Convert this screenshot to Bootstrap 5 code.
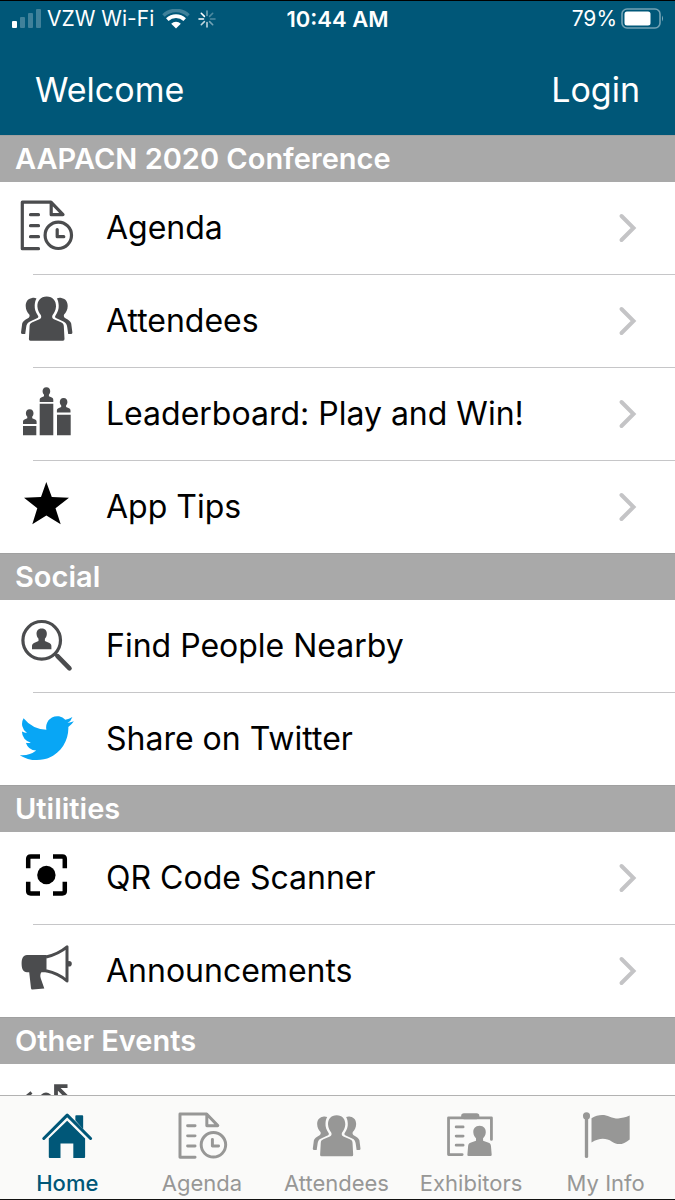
<!DOCTYPE html>
<html lang="en">
<head>
<meta charset="utf-8">
<meta name="viewport" content="width=device-width, initial-scale=1">
<title>AAPACN 2020 Conference</title>
<link href="https://cdn.jsdelivr.net/npm/bootstrap@5.3.0/dist/css/bootstrap.min.css" rel="stylesheet">
<style>
  body { font-family: Inter, "Liberation Sans", sans-serif; color: #000; background: #fff; }
  a { color: inherit; text-decoration: none; }
  .top-area { background: #005778; border-top: 1px solid #000; color: #fff; }
  .status { font-size: 21px; line-height: 28px; padding: 4px 11px 12px; }
  .status > * { flex: 1 1 0; }
  .clock { font-size: 22px; }
  .title-bar { font-size: 34px; line-height: 40px; padding: 25px 35px; }
  .section-title { background: #a9a9a9; color: #fff; font-size: 29px; font-weight: 600; line-height: 46px; padding: 0 15px; border-top: 1px solid #a0a0a0; }
  .menu-row { height: 92px; padding: 0 37px 0 18px; font-size: 32px; gap: 32px; }
  li:not(:last-child) > .menu-row { height: 93px; padding-bottom: 1px; background: linear-gradient(#c6c6c8, #c6c6c8) 33px 100% / 100% 1px no-repeat; }
  .ico { width: 56px; height: 56px; color: #4b4c4e; flex: none; }
  .ico.solid { color: #000; }
  .ico.bird { color: #08a6f5; }
  .chev { width: 20px; height: 32px; color: #c4c4c6; flex: none; }
  .tabs { background: #fafaf9; border-top: 1px solid #b2b2b2; border-bottom: 1px solid #111; padding: 16px 2px 5px 0; }
  .tabs a { color: #979796; font-size: 22px; line-height: 22px; gap: 8px; flex: 1 1 0; }
  .tabs a.active { color: #005778; font-weight: 500; }
  .tabs svg { width: 52px; height: 52px; }
</style>
</head>
<body>
<svg class="d-none" aria-hidden="true">
  <symbol id="i-agenda" viewBox="0 0 56 56">
    <g fill="none" stroke="currentColor" stroke-width="3.2" stroke-linecap="round" stroke-linejoin="round">
      <path d="M20.5 48.7H4.3V2.2H33L45 14.7H33.2V2.5M12.5 14.7H20.5M12.5 25.7H20.5M12.5 36.7H20.5M39.2 29.5V36.7H45.8"/>
      <circle cx="40.3" cy="35.3" r="13.2"/>
    </g>
  </symbol>
  <symbol id="i-people" viewBox="0 0 56 56">
    <g fill="currentColor">
      <path d="M28.7 3.5C35 3.5 38.2 8 38 13.5C37.8 17.5 36 20 34.6 22C33.8 23.5 34 25.5 36 26.3L43 29.3C45 30.2 45.6 31 45.8 33L46.5 46Q46.5 47.7 45 47.7H12.4Q10.8 47.7 10.9 46L11.6 33C11.8 31 12.4 30.2 14.4 29.3L21.4 26.3C23.4 25.5 23.6 23.5 22.8 22C21.4 20 19.6 17.5 19.4 13.5C19.2 8 22.4 3.5 28.7 3.5Z"/>
      <path id="side" d="M18.5 5.5C17 4.7 15.5 4.7 14 5C9.5 5.7 7.7 9 7.7 13C7.7 17 9.5 19.5 11.3 21.5C12 23 11.5 24.5 9.5 25.5C7 27 4.8 28 4.2 30.5L3 39.5Q3 41 4.5 41H7.2L8.2 34C8.5 31.5 9.5 29.5 12 28.5L19.5 25C20.5 24.3 20.5 23.5 20 22.7C17.5 19 16.5 16 16.7 12.5C16.8 10 17.3 7.5 18.5 5.5Z"/>
      <use href="#side" transform="translate(57.4 0) scale(-1 1)"/>
    </g>
  </symbol>
  <symbol id="i-leader" viewBox="0 0 56 56">
    <g fill="currentColor">
      <path d="M5 40H18.3V49.3H5ZM21.7 17.7H35.3V49.3H21.7ZM39 28.7H52.7V49.3H39Z"/>
      <path id="bust" d="M28.4 1.2C31 1.2 32.4 3.2 32.2 5.6C32.1 7.2 31.5 8 30.9 8.8V10.2L33.8 11.6C35 12.2 35.3 13 35.3 14V15.9H21.7V14C21.7 13 22 12.2 23.2 11.6L26 10.2V8.8C25.3 8 24.7 7.2 24.6 5.6C24.4 3.2 25.8 1.2 28.4 1.2Z"/>
      <use href="#bust" x="-16.7" y="22"/>
      <use href="#bust" x="17.2" y="10.7"/>
    </g>
  </symbol>
  <symbol id="i-star" viewBox="0 0 56 56">
    <path fill="currentColor" d="M28.3 3L33.8 17.9L51 18.7L37.5 29.2L42.7 45.3L28.4 36.4L14.3 45.3L19.3 29.2L6 18.7L23 17.9Z"/>
  </symbol>
  <symbol id="i-find" viewBox="0 0 56 56">
    <circle cx="23.7" cy="22.3" r="18.8" fill="none" stroke="currentColor" stroke-width="3.2"/>
    <path d="M37 35.8L39.5 38.2" stroke="currentColor" stroke-width="3"/>
    <path d="M39.5 38.2L51.5 50.4" stroke="currentColor" stroke-width="4.6" stroke-linecap="round"/>
    <path fill="currentColor" d="M23.7 10.5C27.5 10.5 29.2 13.2 28.8 16.4C28.6 18.6 27.5 19.8 26.9 20.8V23L31.4 25C33 25.8 33.4 26.8 33.4 28.4V31.2H14V28.4C14 26.8 14.4 25.8 16 25L20.5 23V20.8C19.9 19.8 18.8 18.6 18.6 16.4C18.2 13.2 19.9 10.5 23.7 10.5Z"/>
  </symbol>
  <symbol id="i-bird" viewBox="0 0 56 56">
    <path fill="currentColor" transform="translate(1.8 -1.6) scale(3.38)" d="M5.026 15c6.038 0 9.341-5.003 9.341-9.334q.002-.211-.006-.422A6.7 6.7 0 0 0 16 3.542a6.7 6.7 0 0 1-1.889.518 3.3 3.3 0 0 0 1.447-1.817 6.5 6.5 0 0 1-2.087.793A3.286 3.286 0 0 0 7.875 6.03 9.32 9.32 0 0 1 1.112 2.6 3.29 3.29 0 0 0 2.13 6.99 3.3 3.3 0 0 1 .64 6.575v.045a3.29 3.29 0 0 0 2.632 3.218 3.2 3.2 0 0 1-.865.115 3 3 0 0 1-.614-.057 3.28 3.28 0 0 0 3.067 2.277A6.6 6.6 0 0 1 .78 13.58a6 6 0 0 1-.78-.045A9.34 9.34 0 0 0 5.026 15"/>
  </symbol>
  <symbol id="i-scan" viewBox="0 0 56 56">
    <path fill="none" stroke="currentColor" stroke-width="4.5" d="M10.2 18.3V9Q10.2 6.5 12.7 6.5H22M35 6.5H44.3Q46.8 6.5 46.8 9V18.3M46.8 31.7V41Q46.8 43.4 44.3 43.4H35M22 43.4H12.7Q10.2 43.4 10.2 41V31.7"/>
    <circle cx="28.4" cy="25" r="9.2" fill="currentColor"/>
  </symbol>
  <symbol id="i-horn" viewBox="0 0 56 56">
    <path fill="currentColor" d="M9 12H28.5V29.3H23.4C22.2 31 22 33 22.8 35.5L26.3 45.5L14.5 46.6C13.6 46.6 13.2 46.2 13 45.3L11.2 29.3H9C5 29.3 3.6 25.5 3.6 20.6C3.6 15.5 5 12 9 12Z"/>
    <path fill="none" stroke="currentColor" stroke-width="3" stroke-linejoin="round" d="M28 14C36 12 43.5 8.5 49 3.8V38C43.5 33 36 29.5 28 27.8"/>
    <circle cx="51" cy="20.7" r="2.8" fill="currentColor"/>
  </symbol>
  <symbol id="i-event" viewBox="0 0 56 56">
    <path fill="none" stroke="currentColor" stroke-width="3.8" d="M38 18V4.2H49.5M38.5 4.7L52 18"/>
    <path fill="none" stroke="currentColor" stroke-width="3" d="M8.500 14.500L13.500 10.500"/>
    <circle cx="28" cy="16.5" r="6" fill="currentColor"/>
  </symbol>
  <symbol id="i-home" viewBox="0 0 56 56">
    <path fill="none" stroke="currentColor" stroke-width="3.3" stroke-linecap="round" stroke-linejoin="round" d="M3 28.5L28.2 3.4L53.4 28.5"/>
    <path fill="currentColor" d="M37 9V4.4Q37 3.4 38 3.4H44.4Q45.4 3.4 45.4 4.4V18.5ZM28.2 9.3L47.5 28.5V48.5Q47.5 49.5 46.5 49.5H34.8V34H21V49.5H9.4Q8.4 49.5 8.4 48.5V28.5Z"/>
  </symbol>
  <symbol id="i-board" viewBox="0 0 56 56">
    <path fill="none" stroke="currentColor" stroke-width="3" stroke-linecap="round" stroke-linejoin="round" d="M18.5 45.9H3.8V6.3H50V29.5M12 16.1H19.5M12 25.9H19.5M12 35.7H19.5"/>
    <rect x="17.4" y="1.4" width="19.6" height="6.3" rx="3" fill="currentColor"/>
    <path fill="currentColor" d="M37.2 14.8C41.8 14.8 44.2 18 43.9 22C43.7 25 42.2 26.8 41 28.3V31L47 33.2C48.8 34 49.3 35 49.5 36.6L50.3 46Q50.3 47.4 49 47.4H25.4Q24 47.4 24.1 46L24.9 36.6C25.1 35 25.6 34 27.4 33.2L33.4 31V28.3C32.2 26.8 30.7 25 30.5 22C30.2 18 32.6 14.8 37.2 14.8Z"/>
  </symbol>
  <symbol id="i-flag" viewBox="0 0 56 56">
    <path stroke="currentColor" stroke-width="3.6" stroke-linecap="round" d="M7 5V47.8"/>
    <circle cx="7" cy="4.2" r="3.8" fill="currentColor"/>
    <path fill="currentColor" d="M12.4 6.8C19 2.5 26 2.4 32 5C39 8 46 7.2 53.5 3.9V29.5C46.5 35.5 40.5 36 34.5 32C27.5 27.5 20.5 28 12.4 32.8Z"/>
  </symbol>
  <symbol id="i-chev" viewBox="0 0 20 32">
    <path fill="none" stroke="currentColor" stroke-width="4" stroke-linecap="round" stroke-linejoin="miter" d="M3.500 4L15.500 16L3.500 28"/>
  </symbol>
</svg>

<div class="d-flex flex-column vh-100 overflow-hidden">
  <header class="top-area flex-shrink-0">
    <div class="status d-flex align-items-center">
      <div class="d-flex align-items-center text-nowrap">
        <svg width="32" height="20" viewBox="0 0 32 20" fill="#fff" aria-hidden="true"><rect x="1" y="12" width="5" height="7" rx="1"/><g opacity=".25"><rect x="9" y="8" width="5" height="11" rx="1"/><rect x="17" y="4" width="5" height="15" rx="1"/><rect x="25" y="0" width="5" height="19" rx="1"/></g></svg>
        <span class="ms-1">VZW Wi-Fi</span>
        <svg class="ms-2" width="28" height="20" viewBox="0 0 28 20" fill="none" stroke="#fff" stroke-width="3.6" aria-hidden="true"><path opacity=".25" d="M1.5 6.5A18 18 0 0 1 26.5 6.5"/><path d="M5.3 10.6A12.5 12.5 0 0 1 22.7 10.6"/><path fill="#fff" stroke="none" d="M14 19.5L9.2 14.7A7 7 0 0 1 18.8 14.7Z"/></svg>
        <svg class="ms-2" width="18" height="18" viewBox="0 0 18 18" stroke="#fff" stroke-width="1.6" stroke-linecap="round" aria-hidden="true"><path d="M1 9H5.5M3.3 3.3L6.4 6.4"/><path opacity=".75" d="M3.3 14.7L6.4 11.6M9 17V12.5"/><path opacity=".45" d="M9 1V5.5M14.7 14.7L11.6 11.6"/><path opacity=".3" d="M14.7 3.3L11.6 6.4M17 9H12.5"/></svg>
      </div>
      <div class="clock text-center fw-semibold text-nowrap">10:44 AM</div>
      <div class="d-flex align-items-center justify-content-end text-nowrap">
        <span class="me-1">79%</span>
        <svg width="43" height="22" viewBox="0 0 43 22" aria-hidden="true"><rect x="1" y="1" width="38" height="19" rx="5" fill="none" stroke="#fff" stroke-opacity=".45" stroke-width="1.6"/><rect x="3.5" y="3.5" width="26" height="14" rx="2.5" fill="#fff"/><path d="M41 7.5Q43 10.5 41 13.5Z" fill="#fff" opacity=".5"/></svg>
      </div>
    </div>
    <div class="title-bar d-flex justify-content-between">
      <span>Welcome</span>
      <a href="#login">Login</a>
    </div>
  </header>

  <main class="flex-grow-1 overflow-hidden">
    <h2 class="section-title m-0">AAPACN 2020 Conference</h2>
    <ul class="list-unstyled m-0">
      <li><a href="#agenda" class="menu-row d-flex align-items-center"><svg class="ico" aria-hidden="true"><use href="#i-agenda"/></svg><span class="flex-grow-1">Agenda</span><svg class="chev" aria-hidden="true"><use href="#i-chev"/></svg></a></li>
      <li><a href="#attendees" class="menu-row d-flex align-items-center"><svg class="ico" aria-hidden="true"><use href="#i-people"/></svg><span class="flex-grow-1">Attendees</span><svg class="chev" aria-hidden="true"><use href="#i-chev"/></svg></a></li>
      <li><a href="#leaderboard" class="menu-row d-flex align-items-center"><svg class="ico" aria-hidden="true"><use href="#i-leader"/></svg><span class="flex-grow-1">Leaderboard: Play and Win!</span><svg class="chev" aria-hidden="true"><use href="#i-chev"/></svg></a></li>
      <li><a href="#tips" class="menu-row d-flex align-items-center"><svg class="ico solid" aria-hidden="true"><use href="#i-star"/></svg><span class="flex-grow-1">App Tips</span><svg class="chev" aria-hidden="true"><use href="#i-chev"/></svg></a></li>
    </ul>
    <h2 class="section-title m-0">Social</h2>
    <ul class="list-unstyled m-0">
      <li><a href="#nearby" class="menu-row d-flex align-items-center"><svg class="ico" aria-hidden="true"><use href="#i-find"/></svg><span class="flex-grow-1">Find People Nearby</span></a></li>
      <li><a href="#share" class="menu-row d-flex align-items-center"><svg class="ico bird" aria-hidden="true"><use href="#i-bird"/></svg><span class="flex-grow-1">Share on Twitter</span></a></li>
    </ul>
    <h2 class="section-title m-0">Utilities</h2>
    <ul class="list-unstyled m-0">
      <li><a href="#scanner" class="menu-row d-flex align-items-center"><svg class="ico solid" aria-hidden="true"><use href="#i-scan"/></svg><span class="flex-grow-1">QR Code Scanner</span><svg class="chev" aria-hidden="true"><use href="#i-chev"/></svg></a></li>
      <li><a href="#announcements" class="menu-row d-flex align-items-center"><svg class="ico" aria-hidden="true"><use href="#i-horn"/></svg><span class="flex-grow-1">Announcements</span><svg class="chev" aria-hidden="true"><use href="#i-chev"/></svg></a></li>
    </ul>
    <h2 class="section-title m-0">Other Events</h2>
    <ul class="list-unstyled m-0">
      <li><div class="menu-row d-flex align-items-center"><svg class="ico" aria-hidden="true"><use href="#i-event"/></svg></div></li>
    </ul>
  </main>

  <nav class="tabs d-flex flex-shrink-0" aria-label="Main">
    <a href="#home" class="active d-flex flex-column align-items-center" aria-current="page"><svg aria-hidden="true"><use href="#i-home"/></svg><span>Home</span></a>
    <a href="#agenda" class="d-flex flex-column align-items-center"><svg aria-hidden="true"><use href="#i-agenda"/></svg><span>Agenda</span></a>
    <a href="#attendees" class="d-flex flex-column align-items-center"><svg aria-hidden="true"><use href="#i-people"/></svg><span>Attendees</span></a>
    <a href="#exhibitors" class="d-flex flex-column align-items-center"><svg aria-hidden="true"><use href="#i-board"/></svg><span>Exhibitors</span></a>
    <a href="#me" class="d-flex flex-column align-items-center"><svg aria-hidden="true"><use href="#i-flag"/></svg><span>My Info</span></a>
  </nav>
</div>
<script src="https://cdn.jsdelivr.net/npm/bootstrap@5.3.0/dist/js/bootstrap.bundle.min.js"></script>
</body>
</html>
